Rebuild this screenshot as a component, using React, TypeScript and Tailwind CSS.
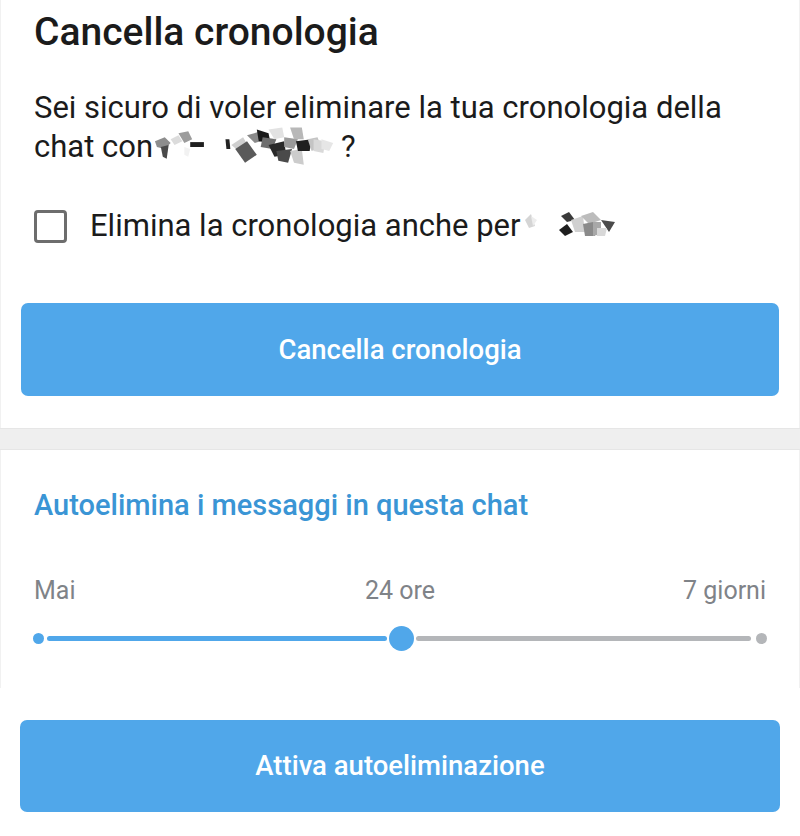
import React from "react";

const font = { fontFamily: "Roboto, 'Noto Sans', Arial, sans-serif" };

// Pixelated contact name, drawn as scattered grey shards
function NameBlur({ variant }: { variant: "long" | "short" }) {
  if (variant === "long") {
    return (
      <svg width="188" height="40" viewBox="0 0 192 40" className="inline-block align-[-10px]">
        <polygon points="2,14 12,10 18,16 12,22 4,20" fill="#8d8d8d" />
        <polygon points="8,20 16,18 14,32 10,30" fill="#4a4a4a" />
        <polygon points="18,12 26,8 30,14 22,18" fill="#dcdcdc" />
        <polygon points="26,6 36,4 40,12 32,16" fill="#9c9c9c" />
        <polygon points="38,15 52,15 52,20 38,20" fill="#1f1f1f" />
        <polygon points="32,20 38,22 36,30 32,28" fill="#f2f2f2" />
        <polygon points="74,12 78,12 79,22 75,22" fill="#222" />
        <polygon points="80,18 92,10 98,20 90,26" fill="#cfcfcf" />
        <polygon points="84,22 96,14 106,28 94,36" fill="#5a5a5a" />
        <polygon points="96,8 110,4 116,12 104,16" fill="#8a8a8a" />
        <polygon points="106,2 118,6 120,16 108,14" fill="#1a1a1a" />
        <polygon points="112,10 126,12 122,22 110,20" fill="#6e6e6e" />
        <polygon points="118,2 132,0 134,10 124,12" fill="#e2e2e2" />
        <polygon points="118,18 134,14 136,28 124,30" fill="#2a2a2a" />
        <polygon points="126,24 142,22 138,36 128,34" fill="#4a4a4a" />
        <polygon points="134,10 148,12 144,22 134,20" fill="#9a9a9a" />
        <polygon points="140,0 152,0 154,12 144,12" fill="#b8b8b8" />
        <polygon points="140,24 152,22 154,38 144,36" fill="#cccccc" />
        <polygon points="146,14 162,12 160,24 148,24" fill="#1f1f1f" />
        <polygon points="158,12 168,10 172,20 162,24" fill="#c4c4c4" />
        <polygon points="164,12 176,14 174,26 164,24" fill="#d9d9d9" />
        <polygon points="172,12 184,16 180,24 172,22" fill="#e6e6e6" />
      </svg>
    );
  }
  return (
    <svg width="100" height="40" viewBox="0 0 100 40" className="inline-block shrink-0">
      <polygon points="4,14 10,8 14,20 8,22" fill="#d5d5d5" />
      <polygon points="10,10 16,14 12,20" fill="#ededed" />
      <polygon points="40,10 48,6 54,14 46,16" fill="#3a3a3a" />
      <polygon points="38,24 46,18 52,26 44,30" fill="#1f1f1f" />
      <polygon points="50,14 62,10 64,26 54,26" fill="#d0d0d0" />
      <polygon points="60,10 72,6 80,14 68,18" fill="#bcbcbc" />
      <polygon points="62,18 72,16 74,30 64,30" fill="#8a8a8a" />
      <polygon points="72,16 80,16 80,28 72,30" fill="#a8a8a8" />
      <polygon points="80,14 94,16 88,26" fill="#4a4a4a" />
      <polygon points="76,22 86,22 84,30 76,30" fill="#d8d8d8" />
    </svg>
  );
}

export default function App() {
  return (
    <div className="w-[800px] h-[836px] bg-white overflow-hidden" style={font}>
      {/* Clear history card */}
      <div className="border-x border-[#f1f1f1] px-5">
        <div className="px-[13px] pt-[8px]">
          <h1 className="text-[39px] leading-[48px] font-medium text-[#1b1b1b]">
            Cancella cronologia
          </h1>
          <p className="mt-[33px] text-[31px] leading-[38px] text-[#1b1b1b] whitespace-nowrap">
            Sei sicuro di voler eliminare la tua cronologia della
            <br />
            chat con
            <NameBlur variant="long" />?
          </p>
          <label className="mt-[39px] flex items-center h-[40px]">
            <span className="w-[33px] h-[33px] rounded-[4px] border-[3.5px] border-[#6d6d6d] shrink-0" />
            <span className="ml-[23px] text-[31px] text-[#1b1b1b] whitespace-nowrap">
              Elimina la cronologia anche per
            </span>
            <NameBlur variant="short" />
          </label>
        </div>
        <button className="mt-[57px] w-full h-[93px] rounded-[7px] bg-[#50a7ea] text-white text-[27.5px] font-medium">
          Cancella cronologia
        </button>
        <div className="h-[32px]" />
      </div>

      {/* Section divider */}
      <div className="h-[22px] bg-[#efefef] border-y border-[#e6e6e6]" />

      {/* Auto-delete card */}
      <div className="border-x border-[#f1f1f1] h-[238px]">
        <div className="px-[33px] pt-[37px]">
          <h2 className="text-[29px] leading-[36px] font-medium text-[#3a95d5]">
            Autoelimina i messaggi in questa chat
          </h2>
          <div className="mt-[53px] grid grid-cols-3 text-[25px] leading-[30px] text-[#7f8388]">
            <span>Mai</span>
            <span className="text-center">24 ore</span>
            <span className="text-right">7 giorni</span>
          </div>
          <div className="mt-[18px] h-[28px] flex items-center">
            <span className="w-[11px] h-[11px] rounded-full bg-[#50a7ea] shrink-0 -ml-[1.5px]" />
            <span className="ml-[3.5px] h-[5px] w-[340px] bg-[#50a7ea] rounded-full" />
            <span className="ml-[1.5px] w-[25px] h-[25px] rounded-full bg-[#50a7ea] shrink-0" />
            <span className="ml-[2.5px] h-[5px] flex-1 bg-[#b4b6b9] rounded-full" />
            <span className="ml-[4.5px] w-[11px] h-[11px] rounded-full bg-[#b4b6b9] shrink-0 -mr-[0.5px]" />
          </div>
        </div>
      </div>

      <div className="px-5 pt-[32px]">
        <button className="w-full h-[92px] rounded-[7px] bg-[#50a7ea] text-white text-[27.5px] font-medium">
          Attiva autoeliminazione
        </button>
      </div>
    </div>
  );
}
